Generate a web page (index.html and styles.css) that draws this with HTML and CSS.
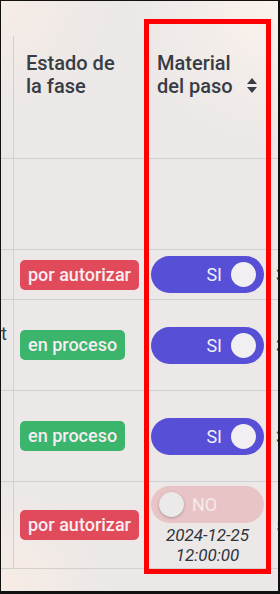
FILE: index.html
```html
<!DOCTYPE html>
<html lang="es">
  <head>
    <meta charset="UTF-8" />
    <meta name="viewport" content="width=device-width, initial-scale=1.0" />
    <title>Fases</title>
    <link rel="stylesheet" href="styles.css">
  </head>
  <body>
    <div class="frame">
      <table class="grid">
        <colgroup>
          <col class="col-a" />
          <col class="col-b" />
          <col class="col-c" />
          <col class="col-d" />
        </colgroup>
        <thead>
          <tr class="head">
            <th class="cut"></th>
            <th>Estado de la fase</th>
            <th>
              <div class="sortable">
                <span>Material del paso</span>
                <svg class="sort" width="10" height="15" viewBox="0 0 10 15">
                  <path d="M5 0 L10 6 L0 6 Z" fill="#3a3d44" />
                  <path d="M0 9 L10 9 L5 15 Z" fill="#3a3d44" />
                </svg>
              </div>
            </th>
            <th></th>
          </tr>
          <tr class="filters">
            <td class="cut"></td>
            <td></td>
            <td></td>
            <td></td>
          </tr>
        </thead>
        <tbody>
          <tr class="short">
            <td class="cut"></td>
            <td><span class="badge red">por autorizar</span></td>
            <td><div class="switch on"><span class="lbl">SI</span><span class="knob"></span></div></td>
            <td class="next">3</td>
          </tr>
          <tr class="tall">
            <td class="cut">t<br />&nbsp;</td>
            <td><span class="badge green">en proceso</span></td>
            <td><div class="switch on"><span class="lbl">SI</span><span class="knob"></span></div></td>
            <td class="next">3</td>
          </tr>
          <tr class="tall">
            <td class="cut"></td>
            <td><span class="badge green">en proceso</span></td>
            <td><div class="switch on"><span class="lbl">SI</span><span class="knob"></span></div></td>
            <td class="next">3</td>
          </tr>
          <tr class="last">
            <td class="cut"></td>
            <td><span class="badge red">por autorizar</span></td>
            <td>
              <div class="switch off"><span class="knob"></span><span class="lbl">NO</span></div>
              <div class="date">2024-12-25<br />12:00:00</div>
            </td>
            <td class="next">5</td>
          </tr>
        </tbody>
      </table>
      <div class="highlight"></div>
    </div>
  </body>
</html>
```

FILE: styles.css
```css
* {
  margin: 0;
  padding: 0;
  box-sizing: border-box;
}
body {
  font-family: Roboto, "Liberation Sans", sans-serif;
  color: #383c44;
}
.frame {
  position: relative;
  width: 280px;
  height: 594px;
  overflow: hidden;
  border-top: 1px solid #111;
  border-left: 1px solid #111;
  border-right: 2px solid #111;
  border-bottom: 3px solid #111;
  background-color: #ebe8e7;
  background-image:
    radial-gradient(circle at 0 0, #f6ece6 0, rgba(246, 236, 230, 0) 120px),
    radial-gradient(circle at 100% 0, #fbf2ec 0, rgba(251, 242, 236, 0) 150px),
    radial-gradient(circle at 0 100%, #f8ece5 0, rgba(248, 236, 229, 0) 110px);
}
.grid {
  margin-top: 35px;
  margin-left: -28px;
  border-collapse: separate;
  border-spacing: 0;
  table-layout: fixed;
  width: 357px;
}
.col-a { width: 41px; }
.col-b { width: 131px; }
.col-c { width: 125px; }
.col-d { width: 60px; }

th, td {
  border-bottom: 1px solid #d2d0cf;
  vertical-align: middle;
}
.cut {
  border-right: 1px solid #d2d0cf;
  text-align: right;
  padding-right: 6px;
  font-size: 18px;
  line-height: 22px;
  color: #34404f;
}
th {
  height: 123px;
  vertical-align: top;
  text-align: left;
  padding: 16px 13px 0 12px;
  font-size: 20px;
  font-weight: 500;
  line-height: 23px;
}
.sortable {
  display: flex;
  align-items: flex-end;
  justify-content: space-between;
}
.sortable span {
  width: 82px;
}
.sort {
  margin-bottom: 5px;
}
.filters td { height: 91px; }
.short td { height: 50px; }
.tall td { height: 91px; }
.last td { height: 87px; }

tbody td {
  padding: 0 6px;
  white-space: nowrap;
}
.badge {
  display: inline-block;
  height: 30px;
  line-height: 30px;
  padding: 0 8px;
  border-radius: 5px;
  font-size: 18px;
  font-weight: 500;
  color: #f6eef0;
}
.red { background-color: #e04a5a; }
.green { background-color: #3bb46c; }

.switch {
  display: flex;
  align-items: center;
  width: 113px;
  height: 37px;
  border-radius: 19px;
  font-size: 18px;
}
.switch.on {
  justify-content: flex-end;
  padding-right: 8px;
  background-color: #574fd6;
  color: #f1eefc;
}
.switch.on .lbl { margin-right: 9px; }
.switch.off {
  padding-left: 8px;
  background-color: #e8c4c6;
  color: #f6eaea;
}
.switch.off .lbl { margin-left: 8px; }
.knob {
  width: 25px;
  height: 25px;
  border-radius: 50%;
  background-color: #f2eff2;
}
.switch.off .knob {
  background-color: #ebe9e9;
  box-shadow: 0 1px 3px rgba(0, 0, 0, 0.25);
}
.date {
  margin-top: 2px;
  width: 113px;
  text-align: center;
  font-size: 17px;
  font-style: italic;
  line-height: 20px;
  color: #30343c;
}
.next {
  font-size: 18px;
  color: #3a3020;
}
.highlight {
  position: absolute;
  left: 143px;
  top: 18px;
  width: 127px;
  height: 555px;
  border: 5px solid #ff0000;
}
```
